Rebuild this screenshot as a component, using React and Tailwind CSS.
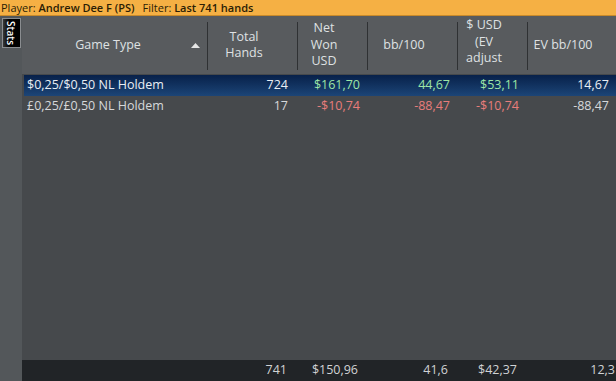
import React from "react";

const cols = [
  { key: "game", label: ["Game Type"], w: "w-[186px]", sort: true },
  { key: "hands", label: ["Total", "Hands"], w: "w-[90px]" },
  { key: "net", label: ["Net", "Won", "USD"], w: "w-[70px]" },
  { key: "bb", label: ["bb/100"], w: "w-[90px]" },
  { key: "ev", label: ["$ USD", "(EV", "adjust"], w: "w-[70px]", up: true },
  { key: "evbb", label: ["EV bb/100"], w: "flex-1" },
];

const rows = [
  {
    game: "$0,25/$0,50 NL Holdem",
    hands: "724",
    net: "$161,70",
    bb: "44,67",
    ev: "$53,11",
    evbb: "14,67",
    pos: true,
  },
  {
    game: "£0,25/£0,50 NL Holdem",
    hands: "17",
    net: "-$10,74",
    bb: "-88,47",
    ev: "-$10,74",
    evbb: "-88,47",
    pos: false,
  },
];

function Header() {
  return (
    <div className="flex h-[58px] bg-[#585b5e] text-[#dfe1e3]">
      {cols.map((c, i) => (
        <div key={c.key} className={`${c.w} relative flex items-center`}>
          <div
            className={`flex-1 flex flex-col items-center justify-center leading-[16.5px] ${
              c.key === "game" ? "pr-[14px]" : "pr-[18px]"
            } ${c.up ? "-mt-[6px]" : ""}`}
          >
            {c.label.map((l) => (
              <span key={l}>{l}</span>
            ))}
          </div>
          {c.sort && (
            <svg
              width="9"
              height="5"
              viewBox="0 0 9 5"
              className="absolute right-[8px] top-[27px]"
            >
              <path d="M0 5 L4.5 0 L9 5 Z" fill="#e6e6e6" />
            </svg>
          )}
          {i < cols.length - 1 && (
            <div className="absolute right-0 top-[6px] bottom-[4px] w-px bg-[#2f3133]" />
          )}
        </div>
      ))}
    </div>
  );
}

function Row({ r, selected }) {
  const money = r.pos ? "text-[#9ee6a6]" : "text-[#e87d7b]";
  return (
    <div
      className={`flex h-[21px] items-center ml-[2px] ${
        selected
          ? "bg-gradient-to-b from-[#08214a] to-[#1c4577] text-[#e9eef4]"
          : "text-[#d6d8da]"
      }`}
    >
      <div className="w-[184px] pl-[3px] whitespace-nowrap">{r.game}</div>
      <div className="w-[90px] text-right pr-[10px]">{r.hands}</div>
      <div className={`w-[70px] text-right pr-[8px] ${money}`}>{r.net}</div>
      <div className={`w-[90px] text-right pr-[8px] ${money}`}>{r.bb}</div>
      <div className={`w-[70px] text-right pr-[9px] ${money}`}>{r.ev}</div>
      <div className="flex-1 text-right pr-[7px]">{r.evbb}</div>
    </div>
  );
}

export default function App() {
  return (
    <div
      className="w-[616px] h-[381px] flex flex-col overflow-hidden bg-[#46494c] text-[12.5px]"
      style={{ fontFamily: '"Open Sans", "Noto Sans", sans-serif' }}
    >
      {/* filter bar */}
      <div className="h-[16px] bg-[#f5b044] text-[#2b1d05] text-[11px] leading-[16px] pl-[1px] whitespace-nowrap border-b border-[#c98a2a]">
        Player: <span className="font-semibold">Andrew Dee F (PS)</span>
        <span className="ml-[8px]">Filter: </span>
        <span className="font-semibold">Last 741 hands</span>
      </div>

      <div className="flex flex-1 min-h-0">
        {/* side tabs */}
        <div className="w-[22px] bg-[#53575a] pt-[2px] flex flex-col items-center">
          <div className="w-[19px] h-[30px] border border-[#8a8d90] bg-gradient-to-r from-[#3a3a3a] via-[#000] to-[#000] flex items-center justify-center">
            <span
              className="text-white text-[10px] font-semibold leading-none"
              style={{ writingMode: "vertical-rl" }}
            >
              Stats
            </span>
          </div>
        </div>

        {/* grid */}
        <div className="flex-1 flex flex-col min-w-0">
          <Header />
          <div className="flex-1 pt-[1px] bg-[#46494c]">
            {rows.map((r, i) => (
              <Row key={r.game} r={r} selected={i === 0} />
            ))}
          </div>
          <div className="h-[21px] flex items-center bg-[#212427] text-[#d0d2d4]">
            <div className="w-[186px]" />
            <div className="w-[90px] text-right pr-[11px]">741</div>
            <div className="w-[70px] text-right pr-[10px]">$150,96</div>
            <div className="w-[90px] text-right pr-[10px]">41,6</div>
            <div className="w-[70px] text-right pr-[11px]">$42,37</div>
            <div className="flex-1 text-right pr-[1px]">12,3</div>
          </div>
        </div>
      </div>
    </div>
  );
}
